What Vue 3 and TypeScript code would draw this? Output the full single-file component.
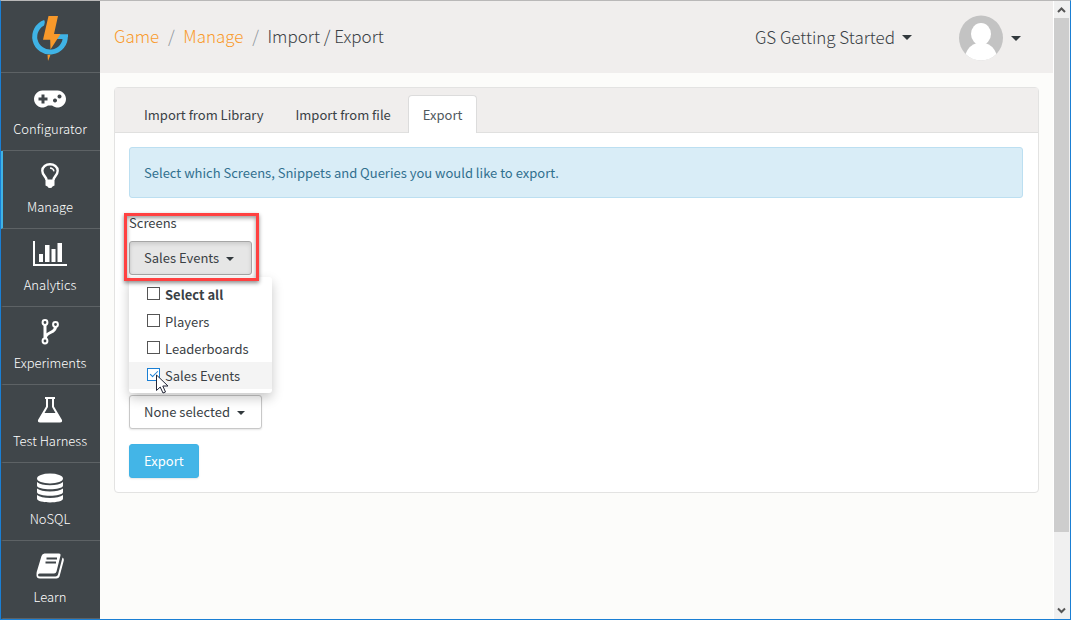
<script setup lang="ts">
import { computed, ref } from 'vue'

interface NavItem {
  label: string
  icon: string
}

interface ScreenOption {
  name: string
  checked: boolean
}

const navItems: NavItem[] = [
  { label: 'Configurator', icon: 'gamepad' },
  { label: 'Manage', icon: 'bulb' },
  { label: 'Analytics', icon: 'chart' },
  { label: 'Experiments', icon: 'fork' },
  { label: 'Test Harness', icon: 'flask' },
  { label: 'NoSQL', icon: 'database' },
  { label: 'Learn', icon: 'book' },
]
const activeNav = ref('Manage')

const tabs = ['Import from Library', 'Import from file', 'Export']
const activeTab = ref('Export')

const screens = ref<ScreenOption[]>([
  { name: 'Players', checked: false },
  { name: 'Leaderboards', checked: false },
  { name: 'Sales Events', checked: true },
])
const menuOpen = ref(true)

const allChecked = computed({
  get: () => screens.value.every((s) => s.checked),
  set: (value: boolean) => screens.value.forEach((s) => (s.checked = value)),
})
const summary = computed(() => {
  const names = screens.value.filter((s) => s.checked).map((s) => s.name)
  return names.length ? names.join(', ') : 'None selected'
})
</script>

<template>
  <div class="window">
    <nav class="sidebar">
      <a class="logo" href="#" aria-label="Home">
        <svg width="40" height="48" viewBox="0 0 40 48" aria-hidden="true">
          <path d="M15 9.300A15.300 15.300 0 1 0 35.300 23" fill="none" stroke="#3fb3e6" stroke-width="5" />
          <path d="M29.500 21.300H38V24L33 26H26.500Z" fill="#3fb3e6" />
          <path d="M17.500 3L12 27.500H20V35" fill="none" stroke="#40464a" stroke-width="2.500" />
          <path d="M18.500 3H28L24 21H30.500L20.500 36.500L20.200 26.800H13Z" fill="#f8992a" />
          <path d="M17.500 41.800H20.500L18 48Z" fill="#f8992a" />
        </svg>
      </a>
      <a
        v-for="item in navItems"
        :key="item.label"
        href="#"
        class="nav-item"
        :class="{ active: item.label === activeNav }"
        @click.prevent="activeNav = item.label"
      >
        <svg class="nav-icon" width="36" height="32" viewBox="0 0 36 32" fill="#fff" aria-hidden="true">
          <path
            v-if="item.icon === 'gamepad'"
            fill-rule="evenodd"
            d="M10.500 8.500H25.500A8.500 8.500 0 1 1 20 23.500H16A8.500 8.500 0 1 1 10.500 8.500ZM9.500 12.500V15.500H6.500V18.500H9.500V21.500H12.500V18.500H15.500V15.500H12.500V12.500ZM27.500 12.500a2 2 0 1 0 .01 0ZM23 16.500a2 2 0 1 0 .01 0Z"
          />
          <g v-else-if="item.icon === 'bulb'">
            <path d="M14.500 20C14.500 16.500 10.300 15.500 10.300 10.800C10.300 6.800 14 4.300 18 4.300S25.700 6.800 25.700 10.800C25.700 15.500 21.500 16.500 21.500 20" fill="none" stroke="#fff" stroke-width="2.400" />
            <path d="M18 8Q21.500 8.300 22 11.300" fill="none" stroke="#fff" stroke-width="1.300" />
            <path d="M13.500 19.500H22.500V25.500L20.500 26.500Q20 28 18 28T15.500 26.500L13.500 25.500Z" />
          </g>
          <path v-else-if="item.icon === 'chart'" d="M1 3H3V26H35V28H1ZM7 16H11V24H7ZM13 7H17.500V24H13ZM19.500 11H23.500V24H19.500ZM25.500 5H30V24H25.500Z" />
          <g v-else-if="item.icon === 'fork'" fill="none" stroke="#fff">
            <path d="M13 9V23M23.500 11C23.500 17.500 13.500 15.500 13.500 22" stroke-width="3" />
            <circle cx="13" cy="6.500" r="2.400" stroke-width="2" />
            <circle cx="23.500" cy="8.500" r="2.400" stroke-width="2" />
            <circle cx="13" cy="25" r="2.400" stroke-width="2" />
          </g>
          <path
            v-else-if="item.icon === 'flask'"
            fill-rule="evenodd"
            d="M13 3H23V5H22V12.500L30 26Q30.500 28.500 28 28.500H8Q5.500 28.500 6 26L14 12.500V5H13ZM16 5V13L12.500 19H23.500L20 13V5Z"
          />
          <g v-else-if="item.icon === 'database'">
            <ellipse cx="18" cy="6.500" rx="13" ry="5" />
            <path d="M5 10Q9 13.200 18 13.200T31 10V13.500C31 18.500 5 18.500 5 13.500Z" />
            <path d="M5 16.500Q9 19.500 18 19.500T31 16.500V20C31 25 5 25 5 20Z" />
            <path d="M5 23Q9 26 18 26T31 23V26.500C31 31.700 5 31.700 5 26.500Z" />
          </g>
          <g v-else>
            <path d="M12.500 3.500H27Q29 3.500 28.500 5.500L24.500 21.500Q24 23.500 22 23.500H7.500Q6 23.500 6 25T8 26.500H23.500Q25.500 26.500 26 24.500L30.500 7.500Q32.300 8.500 31.800 10.500L27.500 26.500Q26.700 28.500 24.500 28.500H8Q4 28.500 4.500 24Q4.500 22 5.300 20L9.500 6Q10.300 3.500 12.500 3.500Z" />
            <path d="M14.500 8.500H25M13.500 12.500H24" stroke="#40464a" stroke-width="1.800" />
          </g>
        </svg>
        <span>{{ item.label }}</span>
      </a>
    </nav>

    <main class="main">
      <header class="header">
        <div class="breadcrumb">
          <a href="#">Game</a>
          <span class="sep">/</span>
          <a href="#">Manage</a>
          <span class="sep">/</span>
          <span>Import / Export</span>
        </div>
        <button class="game-select" type="button">GS Getting Started<i class="caret"></i></button>
        <button class="user" type="button" aria-label="Account">
          <svg width="44" height="46" viewBox="0 0 44 46" aria-hidden="true">
            <ellipse cx="22" cy="23" rx="22" ry="22.500" fill="#c3c3c3" />
            <ellipse cx="22" cy="19" rx="10" ry="11" fill="#fff" />
            <path d="M6.500 39Q10 30 18 28H26Q34 30 37.500 39Q31 45.500 22 45.500T6.500 39Z" fill="#fff" />
          </svg>
          <i class="caret"></i>
        </button>
      </header>

      <section class="panel">
        <div class="tabs" role="tablist">
          <button
            v-for="tab in tabs"
            :key="tab"
            type="button"
            role="tab"
            class="tab"
            :class="{ active: tab === activeTab }"
            :aria-selected="tab === activeTab"
            @click="activeTab = tab"
          >
            {{ tab }}
          </button>
        </div>
        <div class="body">
          <p class="info">Select which Screens, Snippets and Queries you would like to export.</p>

          <div class="field">
            <label class="field-label" for="screens-button">Screens</label>
            <button id="screens-button" class="btn pressed" type="button" @click="menuOpen = !menuOpen">
              {{ summary }}<i class="caret"></i>
            </button>
            <div v-if="menuOpen" class="menu">
              <label class="option bold"><input v-model="allChecked" type="checkbox" /><span>Select all</span></label>
              <label v-for="screen in screens" :key="screen.name" class="option" :class="{ hover: screen.checked }">
                <input v-model="screen.checked" type="checkbox" /><span>{{ screen.name }}</span>
              </label>
              <svg class="pointer" width="13" height="20" viewBox="0 0 13 20" aria-hidden="true">
                <path d="M.5 1V16.500L4.200 13L7 19L9.500 18L6.800 12H12Z" fill="#fff" stroke="#222536" />
              </svg>
            </div>
            <div class="highlight"></div>
          </div>

          <button class="btn" type="button">None selected<i class="caret"></i></button>
          <button class="btn primary" type="button">Export</button>
        </div>
      </section>
    </main>

    <div class="scrollbar" aria-hidden="true">
      <svg width="15" height="17" viewBox="0 0 15 17"><path d="M4 11L7.500 7.500L11 11" /></svg>
      <div class="track"><div class="thumb"></div></div>
      <svg width="15" height="17" viewBox="0 0 15 17"><path d="M4 6.500L7.500 10L11 6.500" /></svg>
    </div>
  </div>
</template>

<style>
body {
  margin: 0;
}
</style>

<style scoped>
.window {
  box-sizing: border-box;
  display: flex;
  height: 100vh;
  overflow: hidden;
  border: 1px solid #1a7fd4;
  border-top-color: #b9b8b8;
  background: #fcfcfa;
  color: #3a4145;
  font-family: "Noto Sans CJK SC", "Open Sans", sans-serif;
  font-size: 13px;
  line-height: 20px;
}

a {
  color: inherit;
  text-decoration: none;
}

button {
  font: inherit;
  color: inherit;
  cursor: pointer;
}

.sidebar {
  flex: none;
  width: 99px;
  background: #40464a;
  color: #fff;
}

.logo {
  box-sizing: border-box;
  display: flex;
  justify-content: center;
  height: 72px;
  padding: 12px 1px 0 0;
  border-bottom: 1px solid #5d6265;
}

.nav-item {
  box-sizing: border-box;
  display: flex;
  flex-direction: column;
  align-items: center;
  height: 78px;
  padding: 9px 3px 0 0;
  border-left: 2px solid transparent;
  border-bottom: 1px solid #5d6265;
  font-weight: 300;
}

.nav-item.active {
  border-left-color: #3fb3e6;
}

.nav-icon {
  margin-bottom: 5px;
}

.main {
  flex: 1;
  min-width: 0;
}

.header {
  display: flex;
  align-items: center;
  height: 72px;
  padding: 0 32px 0 14px;
  background: #f0eeed;
  font-size: 17px;
  font-weight: 300;
  line-height: 24px;
}

.breadcrumb {
  display: flex;
  flex: 1;
  padding-bottom: 2px;
}

.breadcrumb a {
  color: #f99b2c;
}

.sep {
  width: 24px;
  text-align: center;
  color: #8d959b;
}

.game-select,
.user {
  display: flex;
  align-items: center;
  padding: 0;
  border: 0;
  background: none;
}

.game-select {
  margin-right: 47px;
}

.user {
  padding-top: 2px;
}

.caret {
  display: inline-block;
  margin-left: 8px;
  border: 5px solid transparent;
  border-top-color: #32393d;
  border-bottom: 0;
  vertical-align: middle;
}

.game-select .caret {
  margin-left: 7px;
}

.panel {
  margin: 14px 14px 0 14px;
  border: 1px solid #e3e3e2;
  border-radius: 4px;
  background: #fff;
}

.tabs {
  display: flex;
  padding: 7px 14px 0;
  border-bottom: 1px solid #e0e0df;
  background: #f0eeed;
}

.tab {
  margin-bottom: -1px;
  padding: 9px 14px 8px;
  border: 1px solid transparent;
  border-bottom: 0;
  border-radius: 4px 4px 0 0;
  background: none;
}

.tab + .tab {
  margin-left: 2px;
}

.tab.active {
  border-color: #dcdcdc;
  background: #fff;
  color: #50595e;
}

.body {
  display: flex;
  flex-direction: column;
  align-items: flex-start;
  padding: 14px 15px 14px 14px;
}

.info {
  box-sizing: border-box;
  width: 100%;
  margin: 0 0 15px;
  padding: 15px 14px 14px;
  border: 1px solid #bcdff1;
  border-radius: 3px;
  background: #d9edf7;
  color: #31708f;
}

.field {
  position: relative;
  margin-bottom: 120px;
}

.field-label {
  display: block;
  margin-bottom: 8px;
}

.btn {
  display: block;
  height: 34px;
  padding: 0 16px 0 14px;
  border: 1px solid #c8c8c8;
  border-radius: 3px;
  background: #fff;
  box-shadow: 0 1px 2px rgba(0, 0, 0, 0.1);
}

.btn .caret {
  margin-left: 7px;
  border-width: 4px;
  border-bottom-width: 0;
}

.btn.pressed {
  padding-right: 17px;
  border-color: #a6a6a6;
  background: #e6e6e6;
  box-shadow: inset 0 2px 4px rgba(0, 0, 0, 0.12);
}

.btn.primary {
  margin-top: 15px;
  padding: 0 14px;
  border-color: #3fb3e6;
  background: #43b5e7;
  color: #fff;
}

.menu {
  position: absolute;
  top: calc(100% + 2px);
  left: 0;
  width: 143px;
  padding: 4px 0;
  border-radius: 3px;
  background: #fff;
  box-shadow: 0 5px 12px rgba(0, 0, 0, 0.22);
}

.option {
  display: flex;
  align-items: center;
  height: 27px;
  padding-left: 18px;
}

.option.bold {
  font-weight: 700;
}

.option.hover {
  background: #f4f4f4;
}

.option input {
  appearance: none;
  width: 13px;
  height: 13px;
  margin: 0 5px 3px 0;
  border: 1px solid #555;
  background: #fff;
}

.option input:checked {
  display: grid;
  place-items: center;
  border-color: #1a7fd4;
}

.option input:checked::after {
  content: "";
  width: 7px;
  height: 3px;
  margin-bottom: 3px;
  border: solid #1a7fd4;
  border-width: 0 0 1px 1px;
  transform: rotate(-45deg);
}

.pointer {
  position: absolute;
  left: 27px;
  bottom: -1px;
}

.highlight {
  position: absolute;
  inset: 0 -7px -6px -5px;
  border: 3px solid #ff4141;
  box-shadow: 0 2px 4px rgba(0, 0, 0, 0.45), inset 0 2px 4px rgba(0, 0, 0, 0.4);
  pointer-events: none;
}

.scrollbar {
  display: flex;
  flex: none;
  flex-direction: column;
  width: 15px;
  padding-right: 1px;
  border-left: 1px solid #fff;
  background: #f0f0f0;
}

.scrollbar path {
  fill: none;
  stroke: #555;
  stroke-width: 2;
}

.track {
  flex: 1;
}

.thumb {
  height: 88%;
  background: #cdcdcd;
}
</style>
